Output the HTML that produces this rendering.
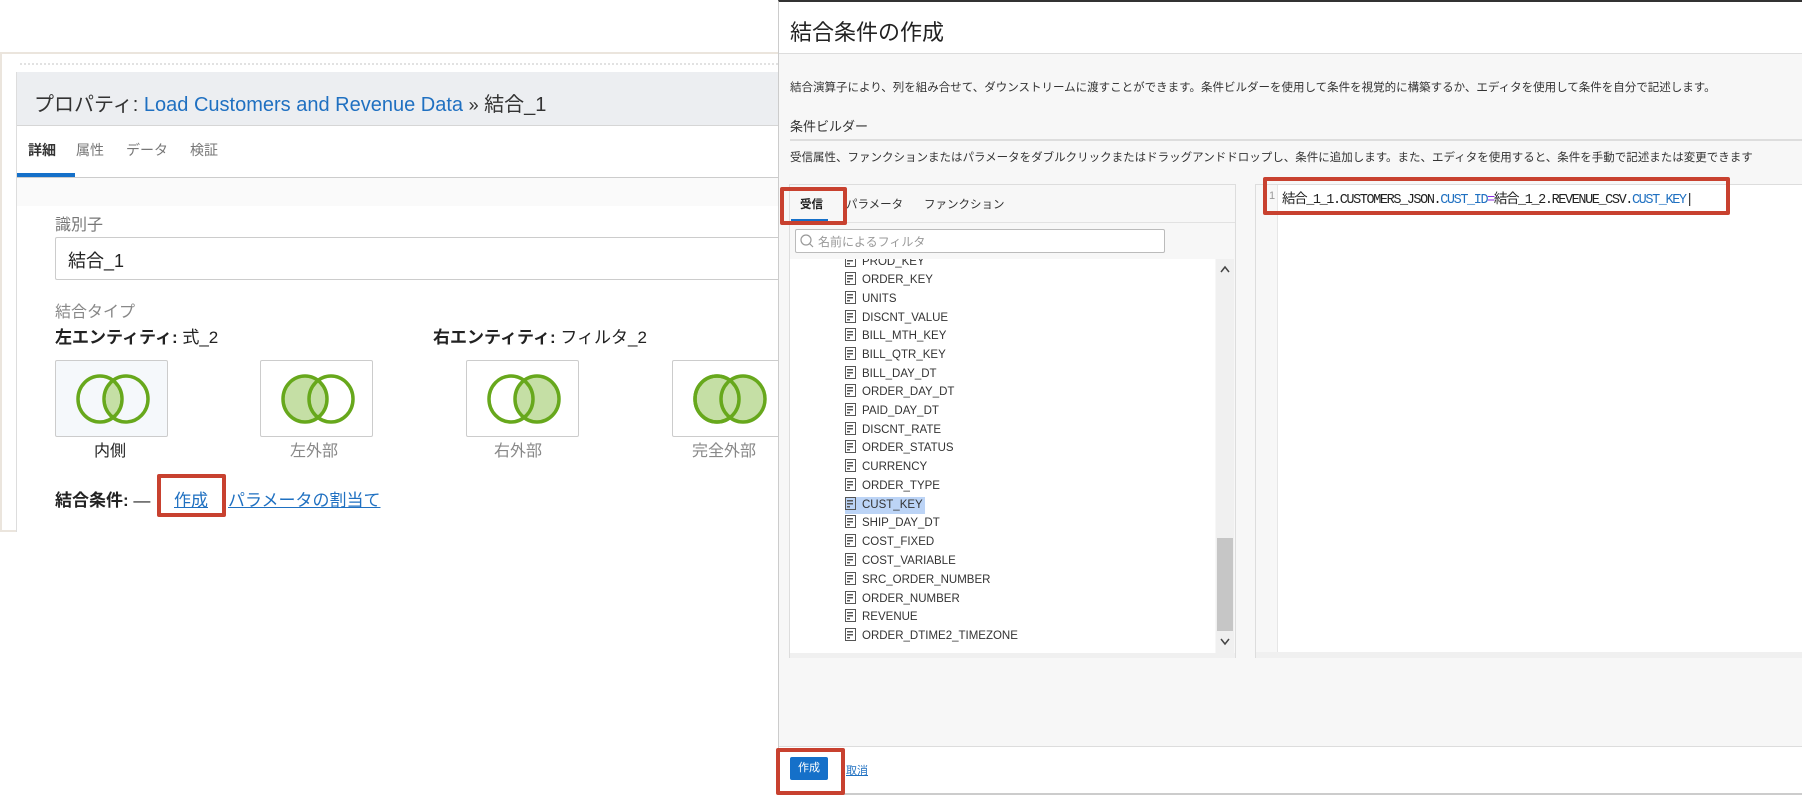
<!DOCTYPE html>
<html><head><meta charset="utf-8"><style>
*{box-sizing:border-box;margin:0;padding:0}
body{width:1802px;height:795px;position:relative;background:#fff;font-family:"Liberation Sans","Noto Sans CJK JP",sans-serif;color:#333;overflow:hidden}
.a{position:absolute;white-space:nowrap}
.venn{position:absolute;width:113px;height:77px;border:1px solid #ccc;border-radius:2px;background:#fff}
.venn svg{position:absolute;left:18px;top:8px}
.it{position:absolute;left:845px;font-size:11.5px;color:#333;height:17px;line-height:17px}
.it i{display:inline-block;width:11px;height:13px;border:1.5px solid #555;vertical-align:-2px;margin-right:6px;position:relative;background:linear-gradient(#555,#555) 1px 2px/6px 1.5px no-repeat,linear-gradient(#555,#555) 1px 5px/6px 1.5px no-repeat,linear-gradient(#555,#555) 1px 8px/3px 1.5px no-repeat}
.red{position:absolute;border:4px solid #c8412f;border-radius:2px}
</style></head><body>
<!-- left panel -->
<div class="a" style="left:0;top:52px;width:779px;height:480px;border:2px solid #ebe5dd;border-right:none;background:#fff"></div>
<div class="a" style="left:20px;top:63px;width:758px;border-top:2px dotted #e2e2e2"></div>
<div class="a" style="left:16px;top:72px;width:762px;height:460px;border-left:1px solid #ddd;background:#fff"></div>
<div class="a" style="left:17px;top:72px;width:761px;height:54px;background:#eceef1;border-bottom:1px solid #d6d6d6"></div>
<div class="a" style="left:34px;top:88px;font-size:20px;color:#333">プロパティ: <span style="color:#1f70c1">Load Customers and Revenue Data</span> <span style="font-size:18px">»</span> 結合_1</div>
<div class="a" style="left:28px;top:140px;font-size:14px;color:#333;font-weight:bold">詳細</div>
<div class="a" style="left:76px;top:140px;font-size:14px;color:#777">属性</div>
<div class="a" style="left:126px;top:140px;font-size:14px;color:#777">データ</div>
<div class="a" style="left:190px;top:140px;font-size:14px;color:#777">検証</div>
<div class="a" style="left:17px;top:177px;width:761px;height:1px;background:#ccc"></div>
<div class="a" style="left:17px;top:173px;width:58px;height:4px;background:#1570c9"></div>
<div class="a" style="left:17px;top:178px;width:761px;height:28px;background:#fafafa"></div>
<div class="a" style="left:55px;top:211px;font-size:16px;color:#777">識別子</div>
<div class="a" style="left:55px;top:237px;width:723px;height:43px;border:1px solid #ccc;border-right:none;border-radius:2px 0 0 2px"></div>
<div class="a" style="left:68px;top:247px;font-size:18px;color:#222">結合_1</div>
<div class="a" style="left:55px;top:298px;font-size:16px;color:#888">結合タイプ</div>
<div class="a" style="left:55px;top:323px;font-size:17px;color:#222"><b>左エンティティ:</b> 式_2</div>
<div class="a" style="left:433px;top:323px;font-size:17px;color:#222"><b>右エンティティ:</b> フィルタ_2</div>
<div class="venn" style="left:55px;top:360px;background:#f5f8fb"><svg width="80" height="60"><path d="M39 13 A22 23 0 0 1 39 47 A22 23 0 0 1 39 13Z" fill="#c5dfa5"/><ellipse cx="52" cy="30" rx="22" ry="23" fill="none" stroke="#67a81c" stroke-width="3.5"/><ellipse cx="26" cy="30" rx="22" ry="23" fill="none" stroke="#67a81c" stroke-width="3.5"/></svg></div>
<div class="venn" style="left:260px;top:360px"><svg width="80" height="60"><ellipse cx="26" cy="30" rx="22" ry="23" fill="#c5dfa5" stroke="#67a81c" stroke-width="3.5"/><ellipse cx="52" cy="30" rx="22" ry="23" fill="none" stroke="#67a81c" stroke-width="3.5"/></svg></div>
<div class="venn" style="left:466px;top:360px"><svg width="80" height="60"><ellipse cx="52" cy="30" rx="22" ry="23" fill="#c5dfa5" stroke="#67a81c" stroke-width="3.5"/><ellipse cx="26" cy="30" rx="22" ry="23" fill="none" stroke="#67a81c" stroke-width="3.5"/></svg></div>
<div class="venn" style="left:672px;top:360px;width:110px"><svg width="80" height="60"><ellipse cx="26" cy="30" rx="22" ry="23" fill="#c5dfa5" stroke="#67a81c" stroke-width="3.5"/><ellipse cx="52" cy="30" rx="22" ry="23" fill="#c5dfa5" stroke="#67a81c" stroke-width="3.5"/><ellipse cx="26" cy="30" rx="22" ry="23" fill="none" stroke="#67a81c" stroke-width="3.5"/></svg></div>
<div class="a" style="left:94px;top:437px;font-size:16px;color:#222">内側</div>
<div class="a" style="left:290px;top:437px;font-size:16px;color:#888">左外部</div>
<div class="a" style="left:494px;top:437px;font-size:16px;color:#888">右外部</div>
<div class="a" style="left:692px;top:437px;font-size:16px;color:#888">完全外部</div>
<div class="a" style="left:55px;top:486px;font-size:17px;color:#222"><b>結合条件:</b> —</div>
<div class="a" style="left:174px;top:486px;font-size:17px;color:#1f70c1;text-decoration:underline">作成</div>
<div class="a" style="left:228px;top:486px;font-size:17px;color:#1f70c1;text-decoration:underline">パラメータの割当て</div>
<div class="red" style="left:157px;top:474px;width:69px;height:43px"></div>

<!-- dialog -->
<div class="a" style="left:778px;top:0;width:1024px;height:795px;background:#f7f7f7;border-left:1px solid #ccc;border-top:2px solid #333"></div>
<div class="a" style="left:779px;top:2px;width:1023px;height:52px;background:#fff;border-bottom:1px solid #ddd"></div>
<div class="a" style="left:790px;top:15px;font-size:22px;color:#222">結合条件の作成</div>
<div class="a" style="left:790px;top:79px;font-size:11.5px;color:#333">結合演算子により、列を組み合せて、ダウンストリームに渡すことができます。条件ビルダーを使用して条件を視覚的に構築するか、エディタを使用して条件を自分で記述します。</div>
<div class="a" style="left:790px;top:116px;font-size:13px;color:#333">条件ビルダー</div>
<div class="a" style="left:790px;top:139px;width:1012px;height:2px;background:#ddd"></div>
<div class="a" style="left:790px;top:149px;font-size:11.5px;color:#333">受信属性、ファンクションまたはパラメータをダブルクリックまたはドラッグアンドドロップし、条件に追加します。また、エディタを使用すると、条件を手動で記述または変更できます</div>
<!-- left list panel -->
<div class="a" style="left:789px;top:184px;width:447px;height:474px;background:#f7f7f7;border:1px solid #ddd"></div>
<div class="a" style="left:800px;top:196px;font-size:11.5px;font-weight:bold;color:#222">受信</div>
<div class="a" style="left:846px;top:196px;font-size:11.5px;color:#333">パラメータ</div>
<div class="a" style="left:924px;top:196px;font-size:11.5px;color:#333">ファンクション</div>
<div class="a" style="left:790px;top:222px;width:445px;height:1px;background:#e2e2e2"></div>
<div class="a" style="left:791px;top:219px;width:37px;height:3px;background:#1570c9"></div>
<div class="a" style="left:795px;top:229px;width:370px;height:24px;background:#fff;border:1px solid #bbb;border-radius:2px"></div>
<svg class="a" style="left:800px;top:234px" width="14" height="14"><circle cx="6" cy="6" r="5" fill="none" stroke="#999" stroke-width="1.2"/><path d="M9.5 9.5L13 13" stroke="#999" stroke-width="1.2"/></svg>
<div class="a" style="left:818px;top:233px;font-size:12px;color:#999">名前によるフィルタ</div>
<div class="a" style="left:790px;top:259px;width:425px;height:394px;background:#fff"></div>
<div class="a" style="left:1216px;top:259px;width:18px;height:394px;background:#f0f0f0"></div>
<div class="a" style="left:1217px;top:538px;width:16px;height:93px;background:#c6c6c6"></div>
<svg class="a" style="left:1219px;top:265px" width="12" height="10"><path d="M2 7L6 2L10 7" fill="none" stroke="#444" stroke-width="1.5"/></svg>
<svg class="a" style="left:1219px;top:637px" width="12" height="10"><path d="M2 2L6 7L10 2" fill="none" stroke="#444" stroke-width="1.5"/></svg>
<div class="a" style="left:790px;top:653px;width:445px;height:5px;background:#f0f0f0"></div>
<div class="a" style="left:790px;top:259px;width:425px;height:394px;overflow:hidden">
<div style="position:relative;left:-790px;top:-259px">
<div class="it" style="top:254px"><i></i>PROD_KEY</div>
<div class="it" style="top:272px"><i></i>ORDER_KEY</div>
<div class="it" style="top:291px"><i></i>UNITS</div>
<div class="it" style="top:310px"><i></i>DISCNT_VALUE</div>
<div class="it" style="top:328px"><i></i>BILL_MTH_KEY</div>
<div class="it" style="top:347px"><i></i>BILL_QTR_KEY</div>
<div class="it" style="top:366px"><i></i>BILL_DAY_DT</div>
<div class="it" style="top:384px"><i></i>ORDER_DAY_DT</div>
<div class="it" style="top:403px"><i></i>PAID_DAY_DT</div>
<div class="it" style="top:422px"><i></i>DISCNT_RATE</div>
<div class="it" style="top:440px"><i></i>ORDER_STATUS</div>
<div class="it" style="top:459px"><i></i>CURRENCY</div>
<div class="it" style="top:478px"><i></i>ORDER_TYPE</div>
<div class="it" style="top:497px;background:#bcd4f6;padding-right:2px"><i></i>CUST_KEY</div>
<div class="it" style="top:515px"><i></i>SHIP_DAY_DT</div>
<div class="it" style="top:534px"><i></i>COST_FIXED</div>
<div class="it" style="top:553px"><i></i>COST_VARIABLE</div>
<div class="it" style="top:572px"><i></i>SRC_ORDER_NUMBER</div>
<div class="it" style="top:591px"><i></i>ORDER_NUMBER</div>
<div class="it" style="top:609px"><i></i>REVENUE</div>
<div class="it" style="top:628px"><i></i>ORDER_DTIME2_TIMEZONE</div>
</div></div>
<!-- editor -->
<div class="a" style="left:1255px;top:184px;width:547px;height:474px;background:#fff;border:1px solid #ddd;border-right:none"></div>
<div class="a" style="left:1256px;top:185px;width:22px;height:467px;background:#f7f7f7;border-right:1px solid #e6e6e6"></div>
<div class="a" style="left:1256px;top:652px;width:546px;height:6px;background:#f0f0f0"></div>
<div class="a" style="left:1269px;top:190px;font-size:11px;color:#999">1</div>
<div class="a" style="left:1282px;top:187px;font-size:13.5px;font-family:'Liberation Mono','Noto Sans CJK JP',monospace;letter-spacing:-1.4px;color:#222">結合_1_1.CUSTOMERS_JSON.<span style="color:#1f70c1">CUST_ID</span><span style="color:#8a2be2">=</span>結合_1_2.REVENUE_CSV.<span style="color:#1f70c1">CUST_KEY</span>|</div>
<div class="red" style="left:1263px;top:177px;width:467px;height:38px"></div>
<div class="red" style="left:780px;top:187px;width:67px;height:38px"></div>
<!-- footer -->
<div class="a" style="left:779px;top:746px;width:1023px;height:49px;background:#fff;border-top:1px solid #ddd;border-bottom:2px solid #ccc"></div>
<div class="a" style="left:790px;top:757px;width:38px;height:23px;background:#1570c9;border-radius:2px;color:#fff;font-size:11px;line-height:23px;text-align:center">作成</div>
<div class="a" style="left:846px;top:762px;font-size:11px;color:#1f70c1;text-decoration:underline">取消</div>
<div class="red" style="left:776px;top:748px;width:69px;height:47px"></div>
</body></html>
